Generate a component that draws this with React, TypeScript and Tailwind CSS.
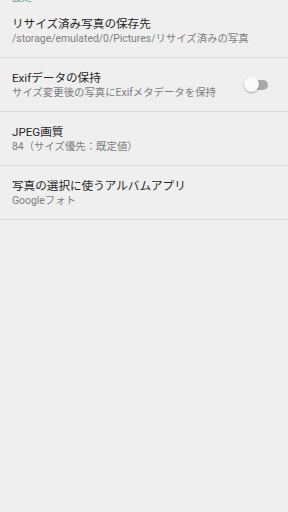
import React from 'react';

type Item = { title: string; summary: string; toggle?: boolean };

const items: Item[] = [
  { title: 'リサイズ済み写真の保存先', summary: '/storage/emulated/0/Pictures/リサイズ済みの写真' },
  { title: 'Exifデータの保持', summary: 'サイズ変更後の写真にExifメタデータを保持', toggle: true },
  { title: 'JPEG画質', summary: '84（サイズ優先：既定値）' },
  { title: '写真の選択に使うアルバムアプリ', summary: 'Googleフォト' },
];

function Switch() {
  return (
    <div className="relative mr-[20px] h-[14px] w-[22px]">
      <div className="absolute right-0 top-[2px] h-[10px] w-[18px] rounded-full bg-[#a8a8a8]" />
      <div className="absolute left-[-2px] top-[-1px] h-[15px] w-[15px] rounded-full bg-[#fafafa] shadow-[0_1px_2px_rgba(0,0,0,0.3)]" />
    </div>
  );
}

export default function App() {
  return (
    <div
      className="h-[512px] w-[288px] overflow-hidden bg-[#efefef]"
      style={{ fontFamily: 'Roboto, "Noto Sans CJK JP", sans-serif' }}
    >
      {/* header of the group, scrolled mostly out of view */}
      <div className="relative h-[4px] overflow-hidden">
        <span className="absolute left-[12px] top-[-8px] text-[10px] leading-[12px] text-[#7d9a86]">設定</span>
      </div>
      {items.map((it) => (
        <div
          key={it.title}
          className="flex h-[54px] items-center border-b border-[#dadada] pl-[12px]"
        >
          <div className="flex flex-1 flex-col pt-[1px]">
            <span className="text-[11.6px] leading-[16px] text-[#262626]">{it.title}</span>
            <span className="text-[10.4px] leading-[14px] text-[#7d7d7d]">{it.summary}</span>
          </div>
          {it.toggle && <Switch />}
        </div>
      ))}
    </div>
  );
}
